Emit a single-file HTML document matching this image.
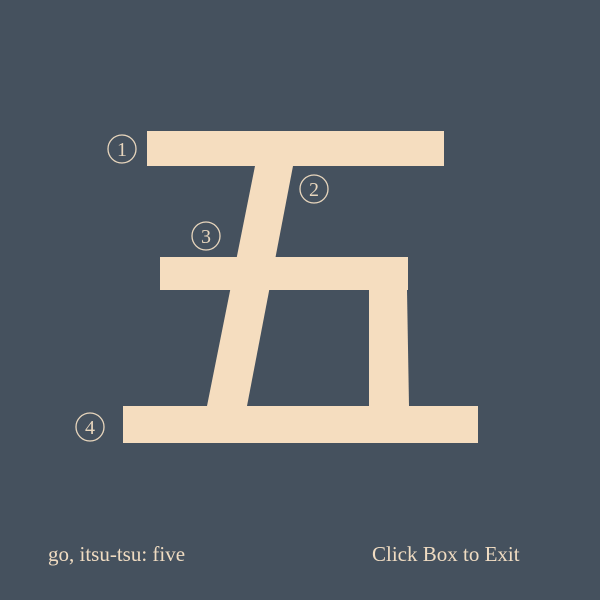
<!DOCTYPE html>
<html><head><meta charset="utf-8"><style>
html,body{margin:0;padding:0;background:#45515e;width:600px;height:600px;overflow:hidden}
.t{position:absolute;font-family:"Liberation Serif",serif;color:#f0dcc2;font-size:21px;top:542px}
</style></head><body>
<svg width="600" height="600" style="position:absolute;left:0;top:0">
<g fill="#f5ddbf">
<rect x="147" y="131" width="297" height="35"/>
<polygon points="255,166 293,166 247,406 207,406"/>
<rect x="160" y="257" width="248" height="33"/>
<polygon points="369,290 407,290 409,406 369,406"/>
<rect x="123" y="406" width="355" height="37"/>
</g>
<g fill="none" stroke="#e8d6bd" stroke-width="1.3">
<circle cx="122" cy="149" r="14"/>
<circle cx="314" cy="189" r="14"/>
<circle cx="206" cy="236" r="14"/>
<circle cx="90" cy="427" r="14"/>
</g>
<g fill="#e8d6bd" font-family="Liberation Serif,serif" font-size="20" text-anchor="middle">
<text x="122" y="156">1</text>
<text x="314" y="196">2</text>
<text x="206" y="243">3</text>
<text x="90" y="434">4</text>
</g>
</svg>
<div class="t" style="left:48px">go, itsu-tsu: five</div>
<div class="t" style="left:372px">Click Box to Exit</div>
</body></html>
